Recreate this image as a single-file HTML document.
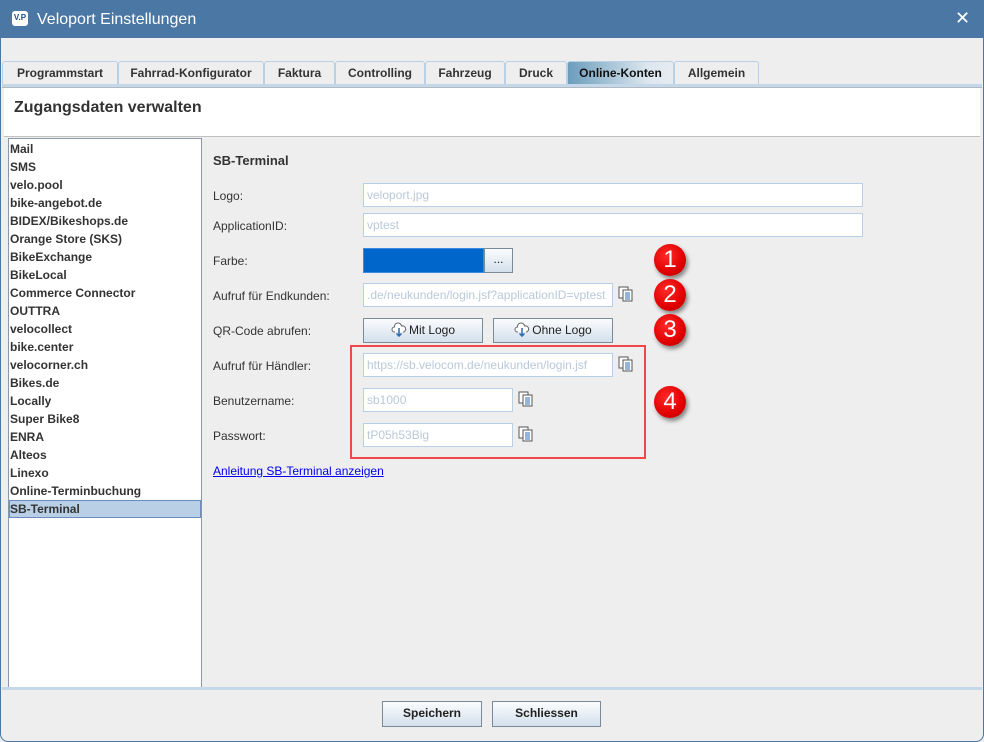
<!DOCTYPE html>
<html><head><meta charset="utf-8"><style>
*{box-sizing:border-box;margin:0;padding:0}
body{width:984px;height:742px;overflow:hidden;background:#eeeeee;font-family:"Liberation Sans",Arial,sans-serif;font-size:12px;color:#333;position:relative}
.abs{position:absolute}
#title{left:0;top:0;width:984px;height:38px;background:#4a77a4;color:#fff;font-size:16px}
#frame{left:0;top:38px;width:984px;height:704px;border:1px solid #4a77a4;border-top:none;border-radius:0 0 8px 8px}
.tab{top:61px;height:24px;border:1px solid #b8cfe5;border-bottom:none;border-radius:3px 3px 0 0;background:#eeeeee;font-weight:bold;font-size:12px;text-align:center;line-height:22px;color:#333}
.tab.sel{background:linear-gradient(90deg,#6b9dbc,#dce6ee 75%,#e6ecf1);color:#111;top:61px}
.lbl{left:213px;font-size:12px;color:#333}
.fld{background:#fff;border:1px solid #b8cfe5;color:#b9c9d8;font-size:12px;padding-left:3px;line-height:22px;height:24px;white-space:nowrap;overflow:hidden}
.btn{border:1px solid #7a8a99;background:linear-gradient(#fbfcfd,#d3e0ec);font-size:12px;text-align:center;line-height:22px;color:#222}
.li{left:10px;font-weight:bold;font-size:12px;color:#333;height:18px;line-height:18px}
.circ{width:32px;height:32px;border-radius:50%;background:radial-gradient(circle at 40% 35%,#ff2a2a,#e00000 60%,#b00000);color:#fff;font-size:24px;text-align:center;line-height:32px;box-shadow:2px 3px 4px rgba(0,0,0,.45);left:654px}
.cl{vertical-align:-3px;margin-right:2px}
</style></head><body>
<div id="title" class="abs">
 <div class="abs" style="left:12px;top:11px;width:16px;height:15px;background:#fff;border-radius:3px;font-size:8px;color:#1a4d8a;font-weight:bold;line-height:14px;text-align:center">V.P</div>
 <div class="abs" style="left:37px;top:11px">Veloport Einstellungen</div>
 <div class="abs" style="left:955px;top:8px;font-size:18px;font-weight:normal">✕</div>
</div>
<div id="frame" class="abs"></div>
<div class="abs tab" style="left:2px;width:116px">Programmstart</div>
<div class="abs tab" style="left:118px;width:146px">Fahrrad-Konfigurator</div>
<div class="abs tab" style="left:264px;width:71px">Faktura</div>
<div class="abs tab" style="left:335px;width:90px">Controlling</div>
<div class="abs tab" style="left:425px;width:80px">Fahrzeug</div>
<div class="abs tab" style="left:505px;width:62px">Druck</div>
<div class="abs tab sel" style="left:567px;width:107px">Online-Konten</div>
<div class="abs tab" style="left:674px;width:85px">Allgemein</div>
<div class="abs" style="left:2px;top:84px;width:980px;height:4px;background:#c5d8ea;border-bottom:1px solid #b0b8c0"></div>
<div class="abs" style="left:4px;top:88px;width:976px;height:49px;background:#fff;border-bottom:1px solid #c0c0c0"></div>
<div class="abs" style="left:14px;top:99px;font-size:16px;font-weight:bold;color:#333">Zugangsdaten verwalten</div>
<div class="abs" style="left:8px;top:138px;width:194px;height:550px;background:#fff;border:1px solid #8a98a8"></div>
<div class="abs" style="left:9px;top:500px;width:192px;height:18px;background:#b8cfe5;border:1px solid #6a8cc0"></div>
<div class="abs li" style="top:140px">Mail</div>
<div class="abs li" style="top:158px">SMS</div>
<div class="abs li" style="top:176px">velo.pool</div>
<div class="abs li" style="top:194px">bike-angebot.de</div>
<div class="abs li" style="top:212px">BIDEX/Bikeshops.de</div>
<div class="abs li" style="top:230px">Orange Store (SKS)</div>
<div class="abs li" style="top:248px">BikeExchange</div>
<div class="abs li" style="top:266px">BikeLocal</div>
<div class="abs li" style="top:284px">Commerce Connector</div>
<div class="abs li" style="top:302px">OUTTRA</div>
<div class="abs li" style="top:320px">velocollect</div>
<div class="abs li" style="top:338px">bike.center</div>
<div class="abs li" style="top:356px">velocorner.ch</div>
<div class="abs li" style="top:374px">Bikes.de</div>
<div class="abs li" style="top:392px">Locally</div>
<div class="abs li" style="top:410px">Super Bike8</div>
<div class="abs li" style="top:428px">ENRA</div>
<div class="abs li" style="top:446px">Alteos</div>
<div class="abs li" style="top:464px">Linexo</div>
<div class="abs li" style="top:482px">Online-Terminbuchung</div>
<div class="abs li" style="top:500px">SB-Terminal</div>

<div class="abs" style="left:213px;top:153px;font-size:13px;font-weight:bold">SB-Terminal</div>
<div class="abs lbl" style="top:189px">Logo:</div>
<div class="abs fld" style="left:363px;top:183px;width:500px">veloport.jpg</div>
<div class="abs lbl" style="top:219px">ApplicationID:</div>
<div class="abs fld" style="left:363px;top:213px;width:500px">vptest</div>
<div class="abs lbl" style="top:254px">Farbe:</div>
<div class="abs" style="left:363px;top:248px;width:121px;height:25px;background:#0066cc;border:1px solid #3a8ae0"></div>
<div class="abs btn" style="left:484px;top:248px;width:29px;height:25px;line-height:20px">...</div>
<div class="abs lbl" style="top:289px">Aufruf für Endkunden:</div>
<div class="abs fld" style="left:363px;top:283px;width:250px">.de/neukunden/login.jsf?applicationID=vptest</div>
<div class="abs lbl" style="top:324px">QR-Code abrufen:</div>
<div class="abs btn" style="left:363px;top:318px;width:120px;height:25px"><svg class="cl" width="16" height="15" viewBox="0 0 16 15"><path d="M4 10H3.5A2.5 2.5 0 0 1 3.5 5 3.5 3.5 0 0 1 10.5 4 2.7 2.7 0 0 1 12.5 10H12" fill="#fff" stroke="#666"/><path d="M8 6v8M5.5 11.5 8 14l2.5-2.5" fill="none" stroke="#2a6ab0" stroke-width="1.5"/></svg>Mit Logo</div>
<div class="abs btn" style="left:493px;top:318px;width:120px;height:25px"><svg class="cl" width="16" height="15" viewBox="0 0 16 15"><path d="M4 10H3.5A2.5 2.5 0 0 1 3.5 5 3.5 3.5 0 0 1 10.5 4 2.7 2.7 0 0 1 12.5 10H12" fill="#fff" stroke="#666"/><path d="M8 6v8M5.5 11.5 8 14l2.5-2.5" fill="none" stroke="#2a6ab0" stroke-width="1.5"/></svg>Ohne Logo</div>
<div class="abs lbl" style="top:359px">Aufruf für Händler:</div>
<div class="abs fld" style="left:363px;top:353px;width:250px">https://sb.velocom.de/neukunden/login.jsf</div>
<div class="abs lbl" style="top:394px">Benutzername:</div>
<div class="abs fld" style="left:363px;top:388px;width:150px">sb1000</div>
<div class="abs lbl" style="top:429px">Passwort:</div>
<div class="abs fld" style="left:363px;top:423px;width:150px">tP05h53Big</div>
<svg class="abs" style="left:618px;top:286px" width="16" height="16" viewBox="0 0 16 16"><rect x="1" y="1" width="9" height="11" fill="#fff" stroke="#555"/><rect x="5" y="4" width="9" height="11" fill="#fff" stroke="#555"/><path d="M7 7h5M7 9h5M7 11h5M7 13h5" stroke="#2a6ab0"/></svg>
<svg class="abs" style="left:618px;top:356px" width="16" height="16" viewBox="0 0 16 16"><rect x="1" y="1" width="9" height="11" fill="#fff" stroke="#555"/><rect x="5" y="4" width="9" height="11" fill="#fff" stroke="#555"/><path d="M7 7h5M7 9h5M7 11h5M7 13h5" stroke="#2a6ab0"/></svg>
<svg class="abs" style="left:518px;top:391px" width="16" height="16" viewBox="0 0 16 16"><rect x="1" y="1" width="9" height="11" fill="#fff" stroke="#555"/><rect x="5" y="4" width="9" height="11" fill="#fff" stroke="#555"/><path d="M7 7h5M7 9h5M7 11h5M7 13h5" stroke="#2a6ab0"/></svg>
<svg class="abs" style="left:518px;top:426px" width="16" height="16" viewBox="0 0 16 16"><rect x="1" y="1" width="9" height="11" fill="#fff" stroke="#555"/><rect x="5" y="4" width="9" height="11" fill="#fff" stroke="#555"/><path d="M7 7h5M7 9h5M7 11h5M7 13h5" stroke="#2a6ab0"/></svg>
<div class="abs" style="left:350px;top:345px;width:296px;height:114px;border:2px solid #f04848"></div>
<div class="abs" style="left:213px;top:464px;color:#0000ee;text-decoration:underline">Anleitung SB-Terminal anzeigen</div>
<div class="abs circ" style="top:244px">1</div>
<div class="abs circ" style="top:279px">2</div>
<div class="abs circ" style="top:314px">3</div>
<div class="abs circ" style="top:386px">4</div>

<div class="abs" style="left:2px;top:687px;width:980px;height:3px;background:#c5d8ea"></div>
<div class="abs btn" style="left:382px;top:701px;width:100px;height:26px;font-weight:bold">Speichern</div>
<div class="abs btn" style="left:492px;top:701px;width:109px;height:26px;font-weight:bold">Schliessen</div>
</body></html>
